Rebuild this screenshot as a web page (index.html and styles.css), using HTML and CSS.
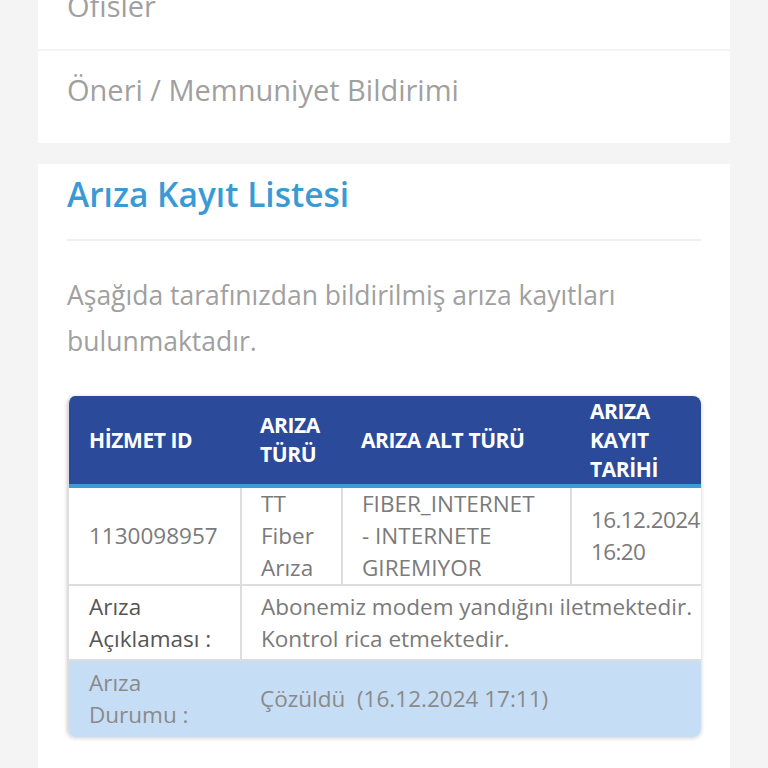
FILE: index.html
```html
<!DOCTYPE html>
<html lang="tr">
<head>
<meta charset="utf-8">
<link rel="stylesheet" href="styles.css">
</head>
<body>
<div class="page">
  <div class="card menu-item first"><span>Ofisler</span></div>
  <div class="card menu-item second"><span>Öneri / Memnuniyet Bildirimi</span></div>
  <div class="card list">
    <h2 class="title">Arıza Kayıt Listesi</h2>
    <div class="divider"></div>
    <p class="desc">Aşağıda tarafınızdan bildirilmiş arıza kayıtları bulunmaktadır.</p>
    <div class="table-wrap">
      <table class="records">
        <colgroup>
          <col class="c1"><col class="c2"><col class="c3"><col class="c4">
        </colgroup>
        <thead>
          <tr>
            <th>HİZMET ID</th>
            <th>ARIZA TÜRÜ</th>
            <th>ARIZA ALT TÜRÜ</th>
            <th>ARIZA KAYIT TARİHİ</th>
          </tr>
        </thead>
        <tbody>
          <tr class="main">
            <td>1130098957</td>
            <td>TT Fiber Arıza</td>
            <td class="subtype">FIBER_INTERNET - INTERNETE GIREMIYOR</td>
            <td class="date">16.12.2024 16:20</td>
          </tr>
          <tr class="detail">
            <td class="label">Arıza Açıklaması&nbsp;:</td>
            <td class="value" colspan="3">Abonemiz modem yandığını iletmektedir. Kontrol rica etmektedir.</td>
          </tr>
          <tr class="status">
            <td class="label">Arıza Durumu&nbsp;:</td>
            <td class="value" colspan="3">Çözüldü &nbsp;(16.12.2024 17:11)</td>
          </tr>
        </tbody>
      </table>
    </div>
  </div>
</div>
</body>
</html>
```

FILE: styles.css
```css
html, body {
  margin: 0;
  padding: 0;
  background: #f4f4f4;
  height: 100%;
  overflow: hidden;
}
body {
  font-family: "Open Sans", "Lato", sans-serif;
}
.page {
  margin-top: -43px;
}
.card {
  background: #fff;
  margin: 0 38px;
  padding: 0 29px;
}
.menu-item {
  font-size: 29px;
  line-height: 28px;
  color: #a0a0a0;
}
.menu-item.first {
  padding-top: 35px;
  padding-bottom: 29px;
  margin-bottom: 2px;
}
.menu-item.second {
  padding-top: 25px;
  padding-bottom: 39px;
  margin-bottom: 21px;
}
.list {
  padding-top: 12px;
  padding-bottom: 40px;
}
.title {
  margin: 0;
  font-size: 33.5px;
  font-weight: 600;
  color: #3a9ad5;
  line-height: 36px;
}
.divider {
  height: 2px;
  background: #eeeeee;
  margin-top: 27px;
}
.desc {
  margin: 31px 0 32px;
  font-size: 26.5px;
  line-height: 46px;
  color: #a0a0a0;
}
.table-wrap {
  box-sizing: border-box;
  width: 634px;
  overflow: hidden;
  border-radius: 8px;
  box-shadow: 0 1px 4px rgba(0,0,0,0.2);
  border-left: 2px solid #dddddd;
}
.records {
  border-collapse: collapse;
  table-layout: fixed;
  width: 632px;
}
.c1 { width: 172px; }
.c2 { width: 101px; }
.c3 { width: 229px; }
.c4 { width: 130px; }
.records th {
  background: #2b4a9a;
  color: #fff;
  font-size: 21px;
  font-weight: 700;
  letter-spacing: -0.4px;
  text-align: left;
  line-height: 29px;
  padding: 0 4px 0 19px;
  height: 88px;
  border-bottom: 4px solid #3d9bd6;
}
.records th:first-child { padding-left: 20px; }
.records td {
  font-size: 22.5px;
  line-height: 32px;
  color: #7a7a7a;
  padding: 0 14px 0 19px;
  vertical-align: middle;
  border-left: 2px solid #dddddd;
  border-bottom: 2px solid #dddddd;
}
.records td:first-child {
  border-left: none;
  padding-left: 20px;
  padding-right: 12px;
}
.records td.subtype { padding-right: 30px; }
.records td.date { padding-right: 0; letter-spacing: -0.6px; }
.records td.value { padding-right: 0; }
.records td.label { padding-right: 20px; }
.records .main td { height: 94px; }
.records .detail td { height: 73px; }
.records .detail .label { color: #555; }
.records .status td {
  background: #c6ddf6;
  color: #8a8a8a;
  height: 76px;
  border-bottom: none;
}
.records .status td + td { border-left: none; }
```
